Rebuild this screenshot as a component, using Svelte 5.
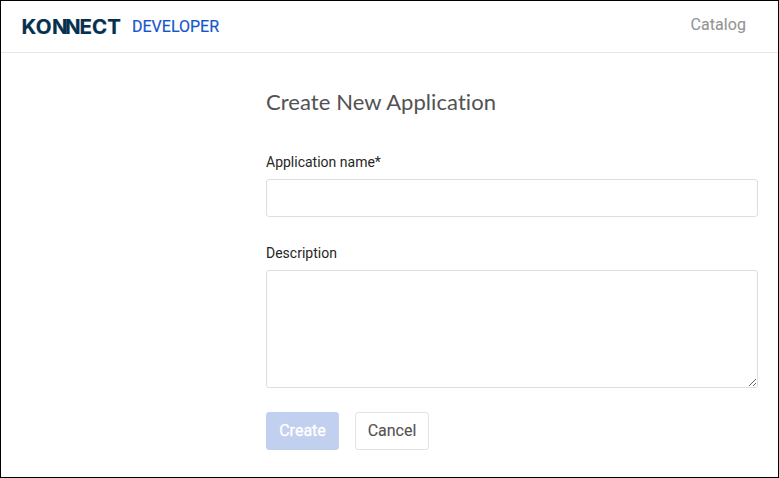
<script>
  let name = $state('');
  let description = $state('');
</script>

<div class="page">
  <header>
    <div class="brand">
      <svg class="logo" width="102" height="26" viewBox="0 0 102 26" aria-label="KONNECT">
        <text transform="scale(1.05 1)" x="-0.5 13.2 28.5 41 54.8 66.6 81.1" y="20">KONNECT</text>
      </svg>
      <span class="product">DEVELOPER</span>
    </div>
    <nav><span>Catalog</span></nav>
  </header>

  <main>
    <h1>Create New Application</h1>
    <form>
      <label for="app-name">Application name*</label>
      <input id="app-name" type="text" bind:value={name} />
      <label for="description" class="second">Description</label>
      <textarea id="description" bind:value={description}></textarea>
      <div class="actions">
        <button type="button" class="create" disabled>Create</button>
        <button type="button" class="cancel">Cancel</button>
      </div>
    </form>
  </main>
</div>

<style>
  :global(body) {
    margin: 0;
  }
  .page {
    box-sizing: border-box;
    width: 779px;
    height: 478px;
    border: 1px solid #000;
    background: #fff;
    font-family: Roboto, sans-serif;
    overflow: hidden;
  }
  header {
    display: flex;
    justify-content: space-between;
    box-sizing: border-box;
    height: 52px;
    padding: 0 32px 0 21px;
    border-bottom: 1px solid #e6e6e6;
  }
  .brand {
    display: flex;
    align-items: center;
  }
  .logo {
    display: block;
    margin-right: 8px;
    overflow: visible;
  }
  .logo text {
    font: 700 19.5px Inter, sans-serif;
    fill: #07304f;
    stroke: #07304f;
    stroke-width: 0.2px;
  }
  .product {
    color: #1456cb;
    font-size: 16px;
    line-height: 20px;
    -webkit-text-stroke: 0.2px #1456cb;
  }
  nav {
    padding-top: 14px;
    color: #949494;
    font-size: 16px;
    line-height: 20px;
    letter-spacing: 0.05px;
    -webkit-text-stroke: 0.1px #949494;
  }
  main {
    padding: 35px 20px 0 265px;
  }
  h1 {
    margin: 0;
    color: #525252;
    font: 400 22px/28px Lato, sans-serif;
    font-variant-ligatures: none;
    letter-spacing: 0.07px;
  }
  form {
    display: flex;
    flex-direction: column;
    padding-top: 37px;
  }
  label {
    margin-bottom: 8px;
    color: #262626;
    font-size: 14px;
    line-height: 18px;
  }
  .second {
    margin-top: 27px;
  }
  input,
  textarea {
    box-sizing: border-box;
    width: 492px;
    margin: 0;
    border: 1px solid #dedede;
    border-radius: 3px;
    background: #fff;
    outline: none;
    font: 16px Roboto, sans-serif;
    padding: 8px 12px;
  }
  input {
    height: 38px;
  }
  textarea {
    height: 118px;
    resize: both;
  }
  .actions {
    display: flex;
    gap: 16px;
    padding-top: 24px;
  }
  button {
    box-sizing: border-box;
    height: 38px;
    padding: 0;
    border: 1px solid #e3e3e3;
    border-radius: 3px;
    font: 16px/20px Roboto, sans-serif;
  }
  .create {
    width: 73px;
    border-color: #c2d0ef;
    background: #c2d0ef;
    color: #fff;
    -webkit-text-stroke: 0.3px #fff;
  }
  .cancel {
    width: 74px;
    background: #fff;
    color: #525252;
    -webkit-text-stroke: 0.1px #525252;
  }
</style>
